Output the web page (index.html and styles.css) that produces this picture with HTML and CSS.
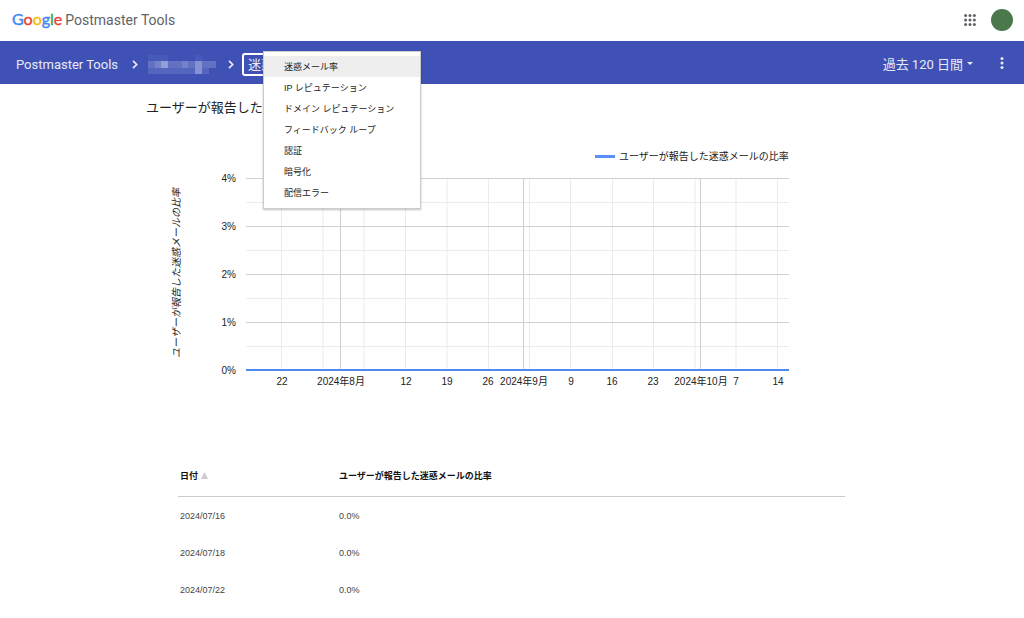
FILE: index.html
```html
<!DOCTYPE html>
<html lang="ja">
<head>
<meta charset="utf-8">
<meta name="viewport" content="width=device-width, initial-scale=1">
<title>Postmaster Tools</title>
<link rel="stylesheet" href="styles.css">
</head>
<body>
<header class="topbar">
  <a class="brand" href="#">
    <span class="brand-name"><span class="c-blue">G</span><span class="c-red">o</span><span class="c-yellow">o</span><span class="c-blue">g</span><span class="c-green">l</span><span class="c-red">e</span></span>
    <span class="brand-product">Postmaster Tools</span>
  </a>
  <div class="account">
    <button class="icon-button" type="button" aria-label="Google アプリ">
      <svg width="12" height="12" viewBox="0 0 12 12" fill="#5f6368"><circle cx="1.6" cy="1.6" r="1.5"/><circle cx="6" cy="1.6" r="1.5"/><circle cx="10.4" cy="1.6" r="1.5"/><circle cx="1.6" cy="6" r="1.5"/><circle cx="6" cy="6" r="1.5"/><circle cx="10.4" cy="6" r="1.5"/><circle cx="1.6" cy="10.4" r="1.5"/><circle cx="6" cy="10.4" r="1.5"/><circle cx="10.4" cy="10.4" r="1.5"/></svg>
    </button>
    <button class="avatar" type="button" aria-label="アカウント"></button>
  </div>
</header>

<nav class="navbar" aria-label="パンくずリスト">
  <a class="crumb" href="#">Postmaster Tools</a>
  <svg class="chevron" width="6" height="9" viewBox="0 0 6 9"><path d="M1 .8 4.7 4.5 1 8.2" fill="none" stroke="currentColor" stroke-width="1.7"/></svg>
  <a class="domain" href="#" aria-label="ドメイン">
    <svg width="68" height="20" viewBox="0 0 68 20">
      <path fill="#485ab9" d="M0 0h20v6H0zM47 0h7v6h-7z"/>
      <path fill="#5465be" d="M0 13h47v6H0zM54 13h7v6h-7z"/>
      <path fill="#6371c3" d="M0 6h68v7H0z"/>
      <path fill="#7582ca" d="M7 6h6v7H7zM34 6h6v7h-6z"/>
      <path fill="#939dd6" d="M13 6h7v7h-7z"/>
      <path fill="#8791d1" d="M47 6h7v13h-7z"/>
    </svg>
  </a>
  <svg class="chevron" width="6" height="9" viewBox="0 0 6 9"><path d="M1 .8 4.7 4.5 1 8.2" fill="none" stroke="currentColor" stroke-width="1.7"/></svg>
  <div class="picker">
    <button class="picker-button" type="button" aria-haspopup="menu" aria-expanded="true">迷惑</button>
    <div class="menu" role="menu">
      <button class="menu-item selected" type="button" role="menuitem">迷惑メール率</button>
      <button class="menu-item" type="button" role="menuitem">IP レピュテーション</button>
      <button class="menu-item" type="button" role="menuitem">ドメイン レピュテーション</button>
      <button class="menu-item" type="button" role="menuitem">フィードバック ループ</button>
      <button class="menu-item" type="button" role="menuitem">認証</button>
      <button class="menu-item" type="button" role="menuitem">暗号化</button>
      <button class="menu-item" type="button" role="menuitem">配信エラー</button>
    </div>
  </div>
  <div class="nav-actions">
    <button class="range" type="button">過去 120 日間 <svg width="6" height="3" viewBox="0 0 6 3"><path d="M0 0h6L3 3z" fill="currentColor"/></svg></button>
    <button class="more" type="button" aria-label="その他">
      <svg width="4" height="12" viewBox="0 0 4 12" fill="currentColor"><circle cx="2" cy="1.6" r="1.5"/><circle cx="2" cy="6" r="1.5"/><circle cx="2" cy="10.4" r="1.5"/></svg>
    </button>
  </div>
</nav>

<main class="content">
  <h1 class="title">ユーザーが報告した</h1>

  <svg class="chart" viewBox="0 0 732 270" role="img" aria-label="ユーザーが報告した迷惑メールの比率">
    <path class="minor" d="M100 77.5h543M100 125.5h543M100 173.5h543M100 221.5h543M135.5 53v192M177 53v192M218 53v192M259.5 53v192M301 53v192M342.5 53v192M383.5 53v192M424.5 53v192M466.5 53v192M507.5 53v192M549 53v192M590 53v192M631.5 53v192"/>
    <path class="major" d="M100 53.5h543M100 101.5h543M100 149.5h543M100 197.5h543M194.5 53v192M377.5 53v192M554.5 53v192"/>
    <path class="series" d="M100 245h543"/>
    <path class="legend-key" d="M449 31.5h20"/>
    <text x="473" y="35">ユーザーが報告した迷惑メールの比率</text>
    <text class="axis-title" transform="translate(34 148) rotate(-90)">ユーザーが報告した迷惑メールの比率</text>
    <g class="y-labels">
      <text x="90" y="57">4%</text>
      <text x="90" y="105">3%</text>
      <text x="90" y="153">2%</text>
      <text x="90" y="201">1%</text>
      <text x="90" y="249">0%</text>
    </g>
    <g class="x-labels">
      <text x="136" y="260">22</text>
      <text x="195" y="260">2024年8月</text>
      <text x="260" y="260">12</text>
      <text x="301" y="260">19</text>
      <text x="342" y="260">26</text>
      <text x="378" y="260">2024年9月</text>
      <text x="425" y="260">9</text>
      <text x="466" y="260">16</text>
      <text x="507" y="260">23</text>
      <text x="555" y="260">2024年10月</text>
      <text x="590" y="260">7</text>
      <text x="632" y="260">14</text>
    </g>
  </svg>

  <table class="report">
    <thead>
      <tr><th class="col-date" scope="col" aria-sort="ascending">日付 <svg width="7" height="7" viewBox="0 0 7 7"><path d="M3.5 0 7 7H0z" fill="#ccc"/></svg></th><th scope="col">ユーザーが報告した迷惑メールの比率</th></tr>
    </thead>
    <tbody>
      <tr><td>2024/07/16</td><td>0.0%</td></tr>
      <tr><td>2024/07/18</td><td>0.0%</td></tr>
      <tr><td>2024/07/22</td><td>0.0%</td></tr>
    </tbody>
  </table>
</main>
</body>
</html>
```
FILE: styles.css
```css
* {
  box-sizing: border-box;
}

body {
  margin: 0;
  background: #fff;
  color: #212121;
  font-family: Roboto, "Noto Sans CJK JP", sans-serif;
}

button {
  margin: 0;
  padding: 0;
  border: 0;
  background: none;
  color: inherit;
  font: inherit;
}

a {
  color: inherit;
  text-decoration: none;
}

svg {
  display: block;
}

.topbar {
  display: flex;
  align-items: center;
  justify-content: space-between;
  height: 41px;
  padding: 0 11px 2px 12px;
}

.brand {
  display: flex;
  align-items: baseline;
  gap: 3px;
  line-height: 20px;
}

.brand-name {
  font-family: Lato, sans-serif;
  font-size: 16px;
  -webkit-text-stroke: 0.4px currentColor;
}

.brand-product {
  color: #5f6368;
  font-size: 14px;
}

.c-blue { color: #4285f4; }
.c-red { color: #ea4335; }
.c-yellow { color: #fbbc05; }
.c-green { color: #34a853; }

.account {
  display: flex;
  align-items: center;
  gap: 15px;
}

.avatar {
  width: 22px;
  height: 22px;
  border-radius: 50%;
  background: #4b784c;
}

.navbar {
  display: flex;
  align-items: center;
  height: 43px;
  padding: 4px 20px 0 16px;
  background: #3f51b5;
  color: #e8eaf6;
  font-size: 13px;
}

.navbar > .chevron {
  margin: 0 10px 0 12px;
}

.crumb {
  min-width: 104px;
}

.picker {
  position: relative;
  margin-left: -2px;
}

.picker-button {
  display: block;
  height: 23px;
  padding: 0 4px;
  border: 2px solid #fff;
  border-radius: 3px;
  line-height: 18px;
}

.menu {
  position: absolute;
  z-index: 1;
  top: -2px;
  left: 21px;
  width: 158px;
  padding: 4px 0 5px;
  border: 1px solid #ccc;
  background: #fff;
  box-shadow: 0 1px 2px rgba(0, 0, 0, 0.25);
}

.menu-item {
  display: block;
  width: 100%;
  padding: 2px 0 0 20px;
  color: #222;
  font-family: "Liberation Sans", "Noto Sans CJK JP", sans-serif;
  font-size: 9px;
  line-height: 19px;
  text-align: left;
}

.menu-item.selected {
  background: #eee;
}

.nav-actions {
  display: flex;
  align-items: center;
  gap: 27px;
  height: 32px;
  margin: 0 0 4px auto;
}

.range {
  display: flex;
  align-items: center;
  gap: 4px;
  padding-top: 2px;
}

.content {
  max-width: 732px;
  margin: 0 auto;
}

.title {
  margin: 0;
  padding-top: 14px;
  font-size: 13px;
  font-weight: 400;
  line-height: 20px;
}

.chart {
  width: 100%;
  margin-top: 7px;
  fill: #222;
  font-family: "Liberation Sans", "Noto Sans CJK JP", sans-serif;
  font-size: 10px;
}

.minor { stroke: #ebebeb; }
.major { stroke: #d0d0d0; }

.series {
  stroke: #4d8af0;
  stroke-width: 2;
}

.legend-key {
  stroke: #5a90f5;
  stroke-width: 3;
}

.axis-title {
  font-style: italic;
  text-anchor: middle;
}

.y-labels { text-anchor: end; }
.x-labels { text-anchor: middle; }

.report {
  width: calc(100% - 65px);
  margin: 59px 0 0 32px;
  border-collapse: collapse;
  color: #444;
  font-family: "Liberation Sans", "Noto Sans CJK JP", sans-serif;
  font-size: 9px;
  line-height: 13px;
}

.report th {
  height: 42px;
  padding: 4px 2px 0;
  border-bottom: 1px solid #ccc;
  color: #111;
  text-align: left;
}

.report td {
  height: 37px;
  padding: 3px 2px 0;
}

.report svg {
  display: inline;
}

.col-date {
  width: 159px;
}
```
